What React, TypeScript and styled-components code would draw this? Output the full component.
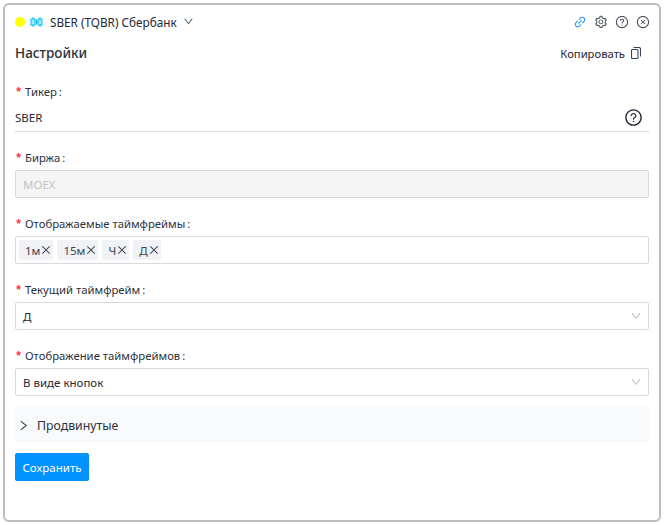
import { createGlobalStyle } from "styled-components"
import styled from "styled-components"
import {
  AiOutlineClose,
  AiOutlineCloseCircle,
  AiOutlineDown,
  AiOutlineLink,
  AiOutlineQuestionCircle,
  AiOutlineRight,
  AiOutlineSetting,
} from "react-icons/ai"

const GlobalStyle = createGlobalStyle`
  html, body {
    margin: 0;
    padding: 0;
    background: #fff;
  }
  body {
    font-family: "Noto Sans", "Open Sans", sans-serif;
    font-size: 11.5px;
    color: #1f2633;
  }
`

const Frame = styled.div`
  box-sizing: border-box;
  width: 658px;
  height: 519px;
  margin: 3px 0 0 3px;
  border: 2px solid #bdbdbd;
  border-radius: 6px;
  background: #fff;
  display: flex;
  flex-direction: column;
`

const Header = styled.div`
  height: 33px;
  padding: 0 9px 0 10px;
  display: flex;
  align-items: center;
  justify-content: space-between;
`

const HeaderLeft = styled.div`
  display: flex;
  align-items: center;
`

const Dot = styled.span`
  width: 10px;
  height: 10px;
  border-radius: 50%;
  background: #ffff00;
  margin-right: 5px;
`

const Title = styled.span`
  margin-left: 7px;
  margin-right: 6px;
  font-size: 11.75px;
`

const HeaderIcons = styled.div`
  display: flex;
  align-items: center;
  gap: 7px;
  color: #444b57;
`

const LinkIcon = styled(AiOutlineLink)`
  color: #1890ff;
`

const Body = styled.div`
  padding: 0 10px;
  display: flex;
  flex-direction: column;
`

const TopRow = styled.div`
  height: 30px;
  display: flex;
  align-items: center;
  justify-content: space-between;
  margin-bottom: 12px;
`

const Heading = styled.h2`
  margin: 0;
  font-size: 13.5px;
  font-weight: 500;
  color: #2b2f38;
`

const CopyButton = styled.div`
  display: flex;
  align-items: center;
  gap: 6px;
  padding-right: 8px;
  font-size: 11.25px;
`

const Field = styled.div`
  display: flex;
  flex-direction: column;
  margin-bottom: 14px;
`

const Label = styled.label`
  height: 22px;
  margin-bottom: 2px;
  display: flex;
  align-items: center;
  font-size: 11.3px;
  color: #2b3240;
`

const Star = styled.span`
  color: #ff3141;
  width: 10px;
  margin-top: 3px;
  font-family: "Liberation Mono", monospace;
  font-weight: 700;
  font-size: 12px;
`

const Colon = styled.span`
  margin-left: 2px;
`

const Underlined = styled.div`
  height: 28px;
  box-sizing: border-box;
  border-bottom: 1px solid #d9d9d9;
  display: flex;
  align-items: center;
  justify-content: space-between;
  padding-right: 6px;
`

const Box = styled.div<{ $disabled?: boolean }>`
  height: 28px;
  box-sizing: border-box;
  border: 1px solid #d9d9d9;
  border-radius: 2px;
  padding: 0 2px 0 7px;
  display: flex;
  align-items: center;
  justify-content: space-between;
  background: ${(p) => (p.$disabled ? "#f5f5f5" : "#fff")};
  color: ${(p) => (p.$disabled ? "#c4c4c4" : "#1f2633")};
`

const TagBox = styled(Box)`
  justify-content: flex-start;
  gap: 4px;
  padding: 0 3px;
`

const Tag = styled.span`
  height: 20px;
  padding: 0 1px 0 6px;
  display: flex;
  align-items: center;
  border-radius: 2px;
  background: #f0f2f5;
  color: #3c4452;
`

const Advanced = styled.div`
  height: 37px;
  padding: 1px 0 0 2px;
  box-sizing: border-box;
  display: flex;
  align-items: center;
  gap: 7px;
  margin-top: -4px;
  background: #f9fafb;
  font-size: 12.3px;
  color: #2b3240;
`

const SaveButton = styled.button`
  align-self: flex-start;
  margin-top: 10px;
  width: 74px;
  height: 28px;
  border: 0;
  border-radius: 2px;
  background: #0092ff;
  color: #fff;
  font: inherit;
  padding: 0;
`

const CandleIcon = () => (
  <svg width="13" height="10" viewBox="0 0 13 10" fill="none" stroke="#10c4f4" strokeWidth="1.1">
    <path d="M3 0v10M10 0v10M5 5h3M6.5 2.5v5" />
    <rect x="1" y="2" width="4" height="6" fill="#a8ecff" />
    <rect x="8" y="2" width="4" height="6" fill="#a8ecff" />
  </svg>
)

const CopyIcon = () => (
  <svg width="10" height="12" viewBox="0 0 10 12" fill="none" stroke="#3c4452" strokeWidth="1.1">
    <rect x="0.5" y="2.5" width="6.5" height="9" rx="1" />
    <path d="M2.5 0.5h5.5a1.5 1.5 0 0 1 1.5 1.5v7.5" />
  </svg>
)

const Chevron = styled(AiOutlineDown)`
  color: #bbbbbb;
  margin-right: 4px;
`

export default function App() {
  return (
    <>
      <GlobalStyle />
      <Frame>
        <Header>
          <HeaderLeft>
            <Dot />
            <CandleIcon />
            <Title>SBER (TQBR) Сбербанк</Title>
            <AiOutlineDown size={11} color="#444b57" />
          </HeaderLeft>
          <HeaderIcons>
            <LinkIcon size={14} />
            <AiOutlineSetting size={14} />
            <AiOutlineQuestionCircle size={14} />
            <AiOutlineCloseCircle size={14} />
          </HeaderIcons>
        </Header>
        <Body>
          <TopRow>
            <Heading>Настройки</Heading>
            <CopyButton>
              Копировать
              <CopyIcon />
            </CopyButton>
          </TopRow>
          <Field>
            <Label><Star>*</Star>Тикер<Colon>:</Colon></Label>
            <Underlined>
              SBER
              <AiOutlineQuestionCircle size={19} color="#1f2633" />
            </Underlined>
          </Field>
          <Field>
            <Label><Star>*</Star>Биржа<Colon>:</Colon></Label>
            <Box $disabled>MOEX</Box>
          </Field>
          <Field>
            <Label><Star>*</Star>Отображаемые таймфреймы<Colon>:</Colon></Label>
            <TagBox>
              {["1м", "15м", "Ч", "Д"].map((t) => (
                <Tag key={t}>{t}<AiOutlineClose size={12} /></Tag>
              ))}
            </TagBox>
          </Field>
          <Field>
            <Label><Star>*</Star>Текущий таймфрейм<Colon>:</Colon></Label>
            <Box>Д<Chevron size={12} /></Box>
          </Field>
          <Field>
            <Label><Star>*</Star>Отображение таймфреймов<Colon>:</Colon></Label>
            <Box>В виде кнопок<Chevron size={12} /></Box>
          </Field>
          <Advanced>
            <AiOutlineRight size={13} />
            Продвинутые
          </Advanced>
          <SaveButton>Сохранить</SaveButton>
        </Body>
      </Frame>
    </>
  )
}
